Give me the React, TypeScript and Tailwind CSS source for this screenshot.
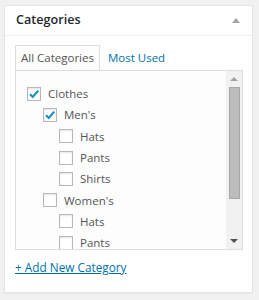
import React from "react"

type Cat = { name: string; checked?: boolean; children?: Cat[] }

const cats: Cat[] = [
  {
    name: "Clothes",
    checked: true,
    children: [
      { name: "Men's", checked: true, children: [{ name: "Hats" }, { name: "Pants" }, { name: "Shirts" }] },
      { name: "Women's", children: [{ name: "Hats" }, { name: "Pants" }, { name: "Shirts" }] },
    ],
  },
]

function Checkbox({ checked }: { checked?: boolean }) {
  return (
    <span className="flex h-[14px] w-[14px] shrink-0 items-center justify-center border border-[#b4b9be] bg-white shadow-[inset_0_1px_2px_rgba(0,0,0,0.1)]">
      {checked && (
        <svg width="12" height="12" viewBox="0 0 12 12">
          <path d="M2 6.2 L4.8 9 L10.2 2.6" fill="none" stroke="#1e8cbe" strokeWidth="2.2" />
        </svg>
      )}
    </span>
  )
}

function CatList({ items }: { items: Cat[] }) {
  return (
    <ul>
      {items.map((c, i) => (
        <li key={i}>
          <label className="flex h-[21.3px] items-center gap-[7px]">
            <Checkbox checked={c.checked} />
            <span>{c.name}</span>
          </label>
          {c.children && (
            <div className="pl-4">
              <CatList items={c.children} />
            </div>
          )}
        </li>
      ))}
    </ul>
  )
}

export default function App() {
  return (
    <div className="h-[300px] w-[259px] overflow-hidden bg-[#f1f1f1] pl-1 pt-[5px] font-['Open_Sans',sans-serif]">
      <div className="h-[288px] w-[249px] border border-[#e5e5e5] bg-white shadow-[0_1px_1px_rgba(0,0,0,0.04)]">
        <div className="flex h-[30px] items-center justify-between border-b border-[#eee] pl-[11px] pr-[12px]">
          <h2 className="text-[12.6px] font-semibold text-[#23282d]">Categories</h2>
          <span className="h-0 w-0 border-x-[4px] border-b-[5px] border-x-transparent border-b-[#a0a5aa]" />
        </div>

        <div className="px-[10px] pt-[9px]">
          <div className="flex text-[11.5px]">
            <div className="flex h-[25px] items-center border border-b-0 border-[#ddd] bg-[#fdfdfd] px-[5px] text-[#555]">
              All Categories
            </div>
            <div className="flex h-[25px] items-center px-[8px] text-[#0073aa]">Most Used</div>
          </div>

          <div className="flex h-[180px] w-[228px] border border-[#ddd] bg-[#fdfdfd]">
            <div className="flex-1 overflow-hidden pl-[11px] pt-3 text-[11.5px] text-[#555]">
              <CatList items={cats} />
            </div>
            <div className="flex w-[16px] flex-col items-center bg-[#f1f1f1]">
              <div className="flex h-[16px] items-center justify-center">
                <span className="h-0 w-0 border-x-[4px] border-b-[4px] border-x-transparent border-b-[#a3a3a3]" />
              </div>
              <div className="mx-[2px] h-[112px] w-[11px] border border-[#a8a8a8] bg-[#bcbcbc]" />
              <div className="flex-1" />
              <div className="flex h-[16px] items-center justify-center">
                <span className="h-0 w-0 border-x-[4px] border-t-[4px] border-x-transparent border-t-[#505050]" />
              </div>
            </div>
          </div>

          <a href="#" className="mt-[9px] inline-block text-[11.8px] text-[#0073aa] underline">
            + Add New Category
          </a>
        </div>
      </div>
    </div>
  )
}
